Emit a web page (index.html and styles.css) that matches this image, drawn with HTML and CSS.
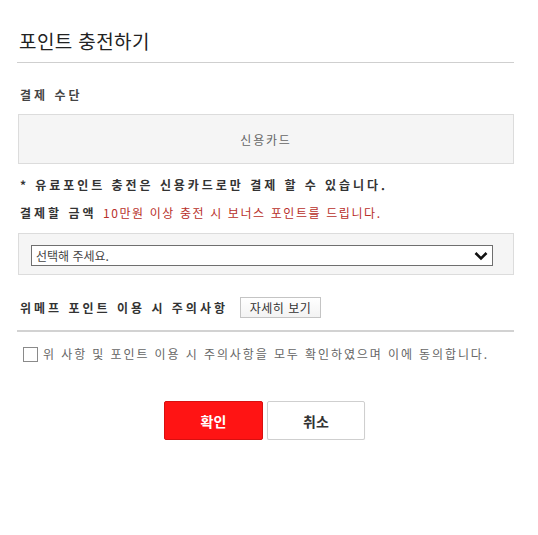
FILE: index.html
```html
<!DOCTYPE html>
<html lang="ko">
<head>
<meta charset="utf-8">
<title>포인트 충전하기</title>
<link rel="stylesheet" href="styles.css">
</head>
<body>
<div class="wrap">
  <h1 class="title">포인트 충전하기</h1>

  <div class="label first">결제 수단</div>
  <div class="method-box">신용카드</div>

  <p class="notice">* 유료포인트 충전은 신용카드로만 결제 할 수 있습니다.</p>
  <p class="amount"><span class="label-inline">결제할 금액</span> <span class="red">10만원 이상 충전 시 보너스 포인트를 드립니다.</span></p>

  <div class="select-box">
    <div class="select">
      <span class="select-text">선택해 주세요.</span>
      <svg class="chev" width="14" height="10" viewBox="0 0 14 10"><path d="M1.5 2 L7 7.5 L12.5 2" fill="none" stroke="#111" stroke-width="2.6"/></svg>
    </div>
  </div>

  <div class="caution">
    <span class="label-inline">위메프 포인트 이용 시 주의사항</span>
    <button class="detail-btn" type="button">자세히 보기</button>
  </div>

  <label class="agree">
    <span class="checkbox"></span>
    <span class="agree-text">위 사항 및 포인트 이용 시 주의사항을 모두 확인하였으며 이에 동의합니다.</span>
  </label>

  <div class="actions">
    <button class="btn btn-ok" type="button">확인</button>
    <button class="btn btn-cancel" type="button">취소</button>
  </div>
</div>
</body>
</html>
```

FILE: styles.css
```css
html, body {
  margin: 0;
  padding: 0;
  background: #fff;
}
body {
  font-family: "Noto Sans CJK KR", "Noto Sans", sans-serif;
  color: #333;
}
.wrap {
  width: 497px;
  margin-left: 17px;
  padding-top: 27px;
}
.title {
  margin: 0;
  font-size: 19px;
  font-weight: 400;
  line-height: 28px;
  letter-spacing: 0.4px;
  color: #222;
  padding: 0 0 7px 2px;
  border-bottom: 1px solid #cfcfcf;
}
.label {
  font-size: 12px;
  font-weight: 700;
  line-height: 16px;
  letter-spacing: 3px;
  color: #444;
  padding-left: 3px;
}
.label.first {
  margin-top: 24px;
}
.method-box {
  margin: 11px 0 0 1px;
  height: 48px;
  border: 1px solid #dcdcdc;
  background: #f5f5f5;
  display: flex;
  align-items: center;
  justify-content: center;
  font-size: 12px;
  letter-spacing: 1.8px;
  color: #666;
}
.notice {
  margin: 13px 0 0;
  padding-left: 3px;
  font-size: 12px;
  font-weight: 700;
  line-height: 16px;
  letter-spacing: 2.95px;
  color: #333;
}
.amount {
  margin: 12px 0 0;
  padding-left: 3px;
  font-size: 12px;
  line-height: 16px;
  color: #333;
}
.label-inline {
  font-weight: 700;
  letter-spacing: 3px;
  color: #333;
}
.red {
  color: #b8302a;
  letter-spacing: 1.6px;
  margin-left: 3px;
}
.select-box {
  margin: 12px 0 0 1px;
  border: 1px solid #dcdcdc;
  background: #f5f5f5;
  padding: 11px 0 0 12px;
  box-sizing: border-box;
  height: 42px;
}
.select {
  position: relative;
  width: 462px;
  height: 21px;
  box-sizing: border-box;
  border: 1px solid #6f6f6f;
  background: #fff;
  display: flex;
  align-items: center;
  padding-left: 4px;
  font-size: 12px;
  color: #444;
}
.chev {
  position: absolute;
  right: 4px;
  top: 5px;
}
.caution {
  margin-top: 22px;
  display: flex;
  align-items: center;
  gap: 12px;
  padding-left: 3px;
  font-size: 12px;
  height: 21px;
  padding-bottom: 12px;
  border-bottom: 2px solid #d2d2d2;
}
.detail-btn {
  height: 21px;
  width: 81px;
  padding: 0;
  border: 1px solid #c4c4c4;
  background: linear-gradient(#ffffff, #f3f3f3);
  font-family: inherit;
  font-size: 12px;
  color: #333;
  letter-spacing: 0.5px;
}
.agree {
  display: flex;
  align-items: center;
  gap: 5px;
  margin-top: 14px;
  padding-left: 6px;
}
.checkbox {
  width: 13px;
  height: 13px;
  border: 1px solid #8a8a8a;
  background: #fff;
  flex: none;
}
.agree-text {
  font-size: 12px;
  letter-spacing: 1.9px;
  color: #666;
  line-height: 16px;
}
.actions {
  margin-top: 39px;
  display: flex;
  justify-content: center;
  gap: 4px;
  padding-right: 2px;
}
.btn {
  width: 99px;
  height: 39px;
  font-family: inherit;
  font-size: 14px;
  font-weight: 700;
  padding: 0;
  border-radius: 2px;
}
.btn-ok {
  background: #ff1414;
  border: 1px solid #d81010;
  color: #fff;
}
.btn-cancel {
  width: 98px;
  background: #fff;
  border: 1px solid #cfcfcf;
  color: #333;
  box-shadow: 0 1px 1px rgba(0,0,0,0.08);
}
```
